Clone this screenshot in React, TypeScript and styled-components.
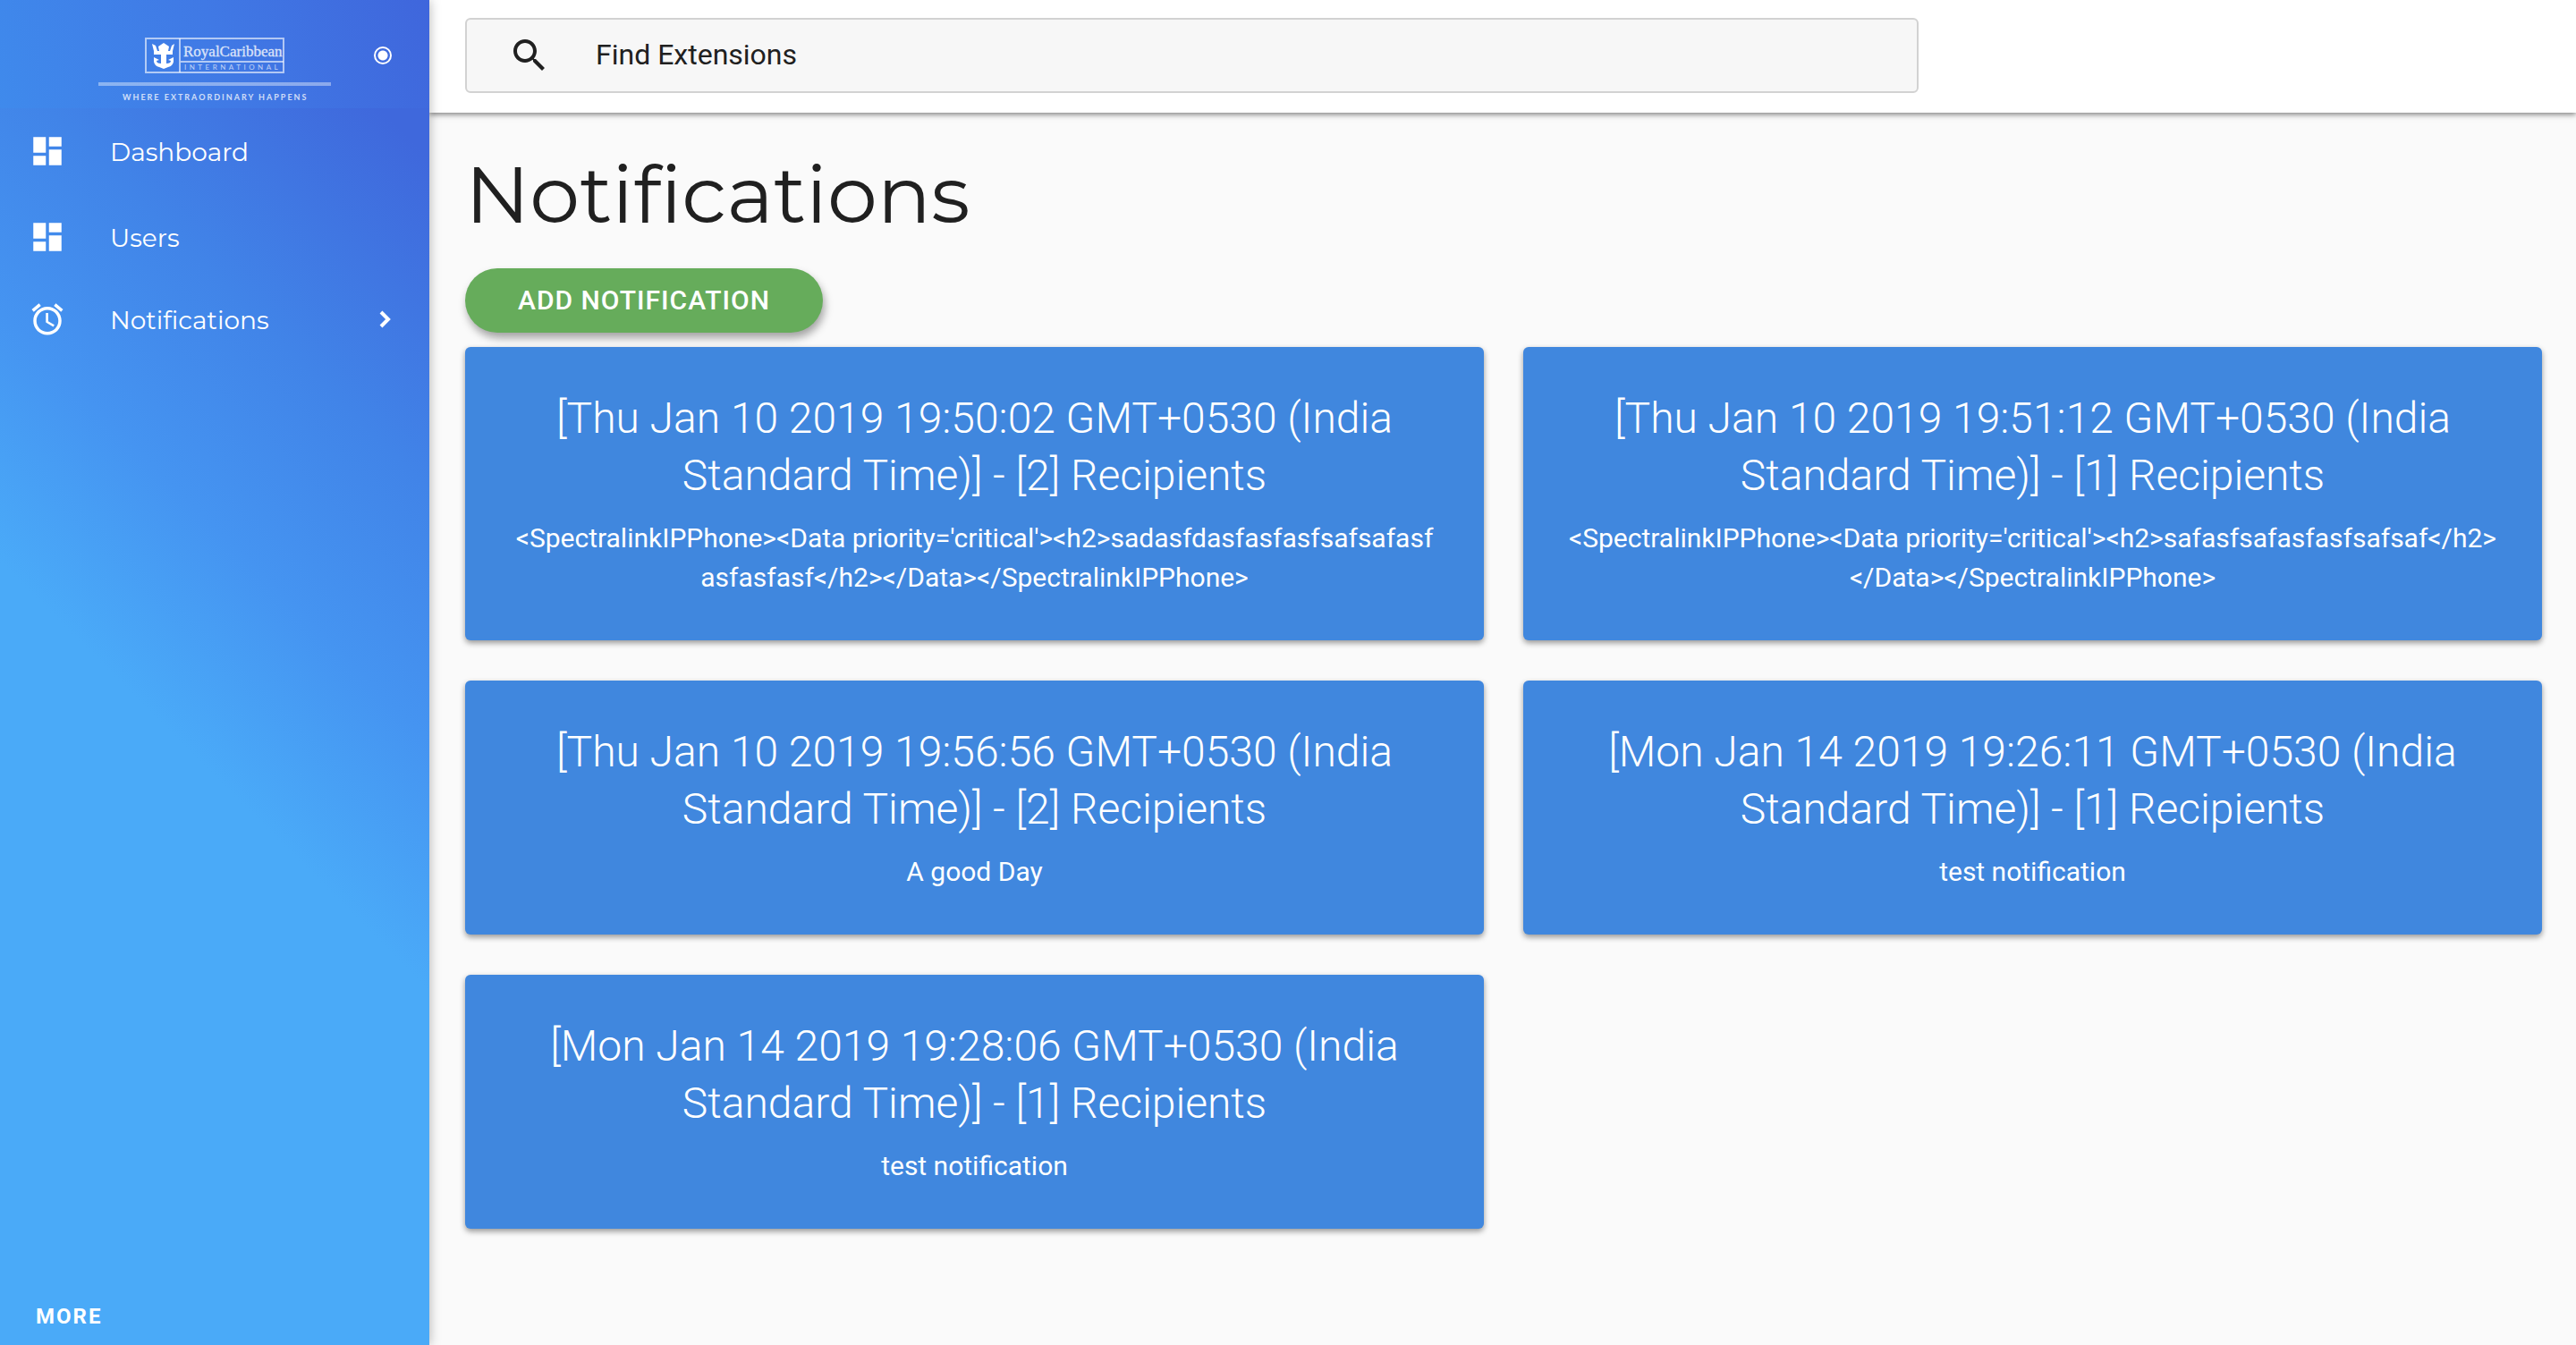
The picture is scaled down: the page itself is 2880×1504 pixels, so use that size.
import React from "react";
import styled, { createGlobalStyle } from "styled-components";

const GlobalStyle = createGlobalStyle`
  *, *::before, *::after { box-sizing: border-box; }
  body {
    margin: 0;
    background: #fafafa;
    color: #202020;
    font-family: Roboto, "Liberation Sans", sans-serif;
    font-size: 32px;
  }
`;

const Page = styled.div`
  display: grid;
  grid-template-columns: 480px minmax(0, 1fr);
  min-height: 100vh;
`;

const Sidebar = styled.aside`
  display: flex;
  flex-direction: column;
  box-shadow: 0 0 12px rgba(0, 0, 0, 0.3);
  color: #fff;
  z-index: 2;
`;

const Brand = styled.div`
  display: grid;
  grid-template-columns: 1fr auto 1fr;
  align-items: start;
  height: 121px;
  padding: 42px 38px 0;
  background: linear-gradient(70deg, #3f8aec 0%, #4079e5 52%, #3f66dc 100%);
`;

const LogoLink = styled.a`
  grid-column: 2;
  display: block;
  line-height: 0;
`;

const PinLabel = styled.label`
  display: flex;
  justify-content: flex-end;
  padding-top: 10px;
`;

const PinRadio = styled.input`
  appearance: none;
  width: 20px;
  height: 20px;
  margin: 0 4px 0 0;
  border: 2px solid #fff;
  border-radius: 50%;
  background: radial-gradient(circle, #fff 0 5px, transparent 6px);
`;

const SidebarBody = styled.div`
  display: flex;
  flex: 1;
  flex-direction: column;
  background: linear-gradient(45deg, #4aaaf8 0%, #4aaaf8 47%, #4594f1 62%, #4184e8 77%, #3f68dc 97%);
`;

const Menu = styled.nav`
  display: flex;
  flex-direction: column;
`;

const MenuItem = styled.a<{ $compact?: boolean }>`
  display: grid;
  grid-template-columns: 91px 1fr auto;
  align-items: center;
  height: ${(p) => (p.$compact ? 88 : 96)}px;
  padding: 0 40px 0 32px;
  color: #fff;
  font-family: Montserrat, Inter, "Open Sans", sans-serif;
  font-size: 28px;
  font-variant-ligatures: none;
  text-decoration: none;
`;

const MenuLabel = styled.span`
  padding-top: 2px;
`;

const MoreButton = styled.button`
  align-self: flex-start;
  margin: auto 0 0;
  padding: 0 40px 20px;
  border: 0;
  background: none;
  color: #fff;
  font: 700 24px/24px Roboto, sans-serif;
  letter-spacing: 2px;
`;

const Main = styled.main`
  min-width: 0;
`;

const TopBar = styled.header`
  height: 126px;
  padding: 20px 38px 0 40px;
  background: #fff;
  box-shadow: 0 2px 6px rgba(0, 0, 0, 0.5);
`;

const SearchBox = styled.label`
  display: flex;
  align-items: center;
  gap: 50px;
  width: 70%;
  height: 84px;
  padding: 0 46px;
  border: 2px solid #d2d2d2;
  border-radius: 6px;
  background: #f7f7f7;
`;

const SearchInput = styled.input`
  flex: 1;
  padding: 0 0 2px;
  border: 0;
  outline: 0;
  background: transparent;
  color: #202020;
  font: 400 32px/40px Roboto, sans-serif;
  &::placeholder { color: #202020; opacity: 1; }
`;

const Content = styled.div`
  padding: 40px 38px 40px 40px;
`;

const Title = styled.h1`
  margin: 0 0 32px;
  font: 400 89px/102px Montserrat, Inter, "Open Sans", sans-serif;
  font-variant-ligatures: none;
`;

const AddButton = styled.button`
  display: block;
  height: 72px;
  margin-bottom: 16px;
  padding: 0 59px;
  border: 0;
  border-radius: 36px;
  background: #66ac5b;
  box-shadow: 2px 6px 10px rgba(0, 0, 0, 0.35);
  color: #fff;
  font: 500 30px/40px Roboto, sans-serif;
  letter-spacing: 1px;
`;

const CardGrid = styled.div`
  display: grid;
  grid-template-columns: repeat(2, minmax(0, 1fr));
  gap: 45px 44px;
`;

const Card = styled.article`
  padding: 48px 49px;
  border-radius: 6px;
  background: #4087de;
  box-shadow: 0 3px 6px rgba(0, 0, 0, 0.4);
  color: #fff;
  text-align: center;
`;

const CardTitle = styled.h2`
  margin: 0 0 16px;
  font-size: 48px;
  font-weight: 300;
  line-height: 64px;
`;

const CardBody = styled.p`
  margin: 0;
  font-size: 30px;
  font-weight: 400;
  line-height: 44px;
  word-break: break-all;
`;

const RoyalLogo = () => (
  <svg width="260" height="72" viewBox="0 0 260 72" fill="#fff" role="img" aria-label="Royal Caribbean International">
    <g fill="none" stroke="#fff" strokeOpacity="0.6" strokeWidth="2">
      <rect x="53" y="1" width="154" height="38" />
      <path d="M91 1v38M91 27h116" />
    </g>
    <path d="M60 7l4 2 2 6h2l-1-5 3-2 3-2 3 2 3 2-1 5h2l2-6 3-2-2 8v4H62v-4z" />
    <path d="M70 19h6v10q5 0 5-3l-3-1 6-3v5q-1 5-6 6l-5 2-5-2q-5-1-6-6v-5l6 3-3 1q0 3 5 3z" />
    <text x="95" y="21" fontFamily="Liberation Serif, serif" fontSize="17" opacity="0.8" stroke="#fff" strokeWidth="0.3">RoyalCaribbean</text>
    <text x="96" y="36" fontFamily="Lato, sans-serif" fontSize="8" letterSpacing="3.5" opacity="0.65">INTERNATIONAL</text>
    <rect y="50" width="260" height="4" opacity="0.4" />
    <text x="27" y="70" fontFamily="Lato, sans-serif" fontWeight="700" fontSize="9" letterSpacing="2" opacity="0.75">WHERE EXTRAORDINARY HAPPENS</text>
  </svg>
);

const iconPaths = {
  dashboard: "M3 13h8V3H3v10zm0 8h8v-6H3v6zm10 0h8V11h-8v10zm0-18v6h8V3h-8z",
  alarm: "M22 5.72l-4.6-3.86-1.29 1.53 4.6 3.86L22 5.72zM7.88 3.39L6.6 1.86 2 5.71l1.29 1.53 4.59-3.85zM12.5 8H11v6l4.75 2.85.75-1.23-4-2.37V8zM12 4c-4.97 0-9 4.03-9 9s4.02 9 9 9c4.97 0 9-4.03 9-9s-4.03-9-9-9zm0 16c-3.87 0-7-3.13-7-7s3.13-7 7-7 7 3.13 7 7-3.13 7-7 7z",
  search: "M15.5 14h-.79l-.28-.27C15.41 12.59 16 11.11 16 9.5 16 5.91 13.09 3 9.5 3S3 5.91 3 9.5 5.91 16 9.5 16c1.61 0 3.09-.59 4.23-1.57l.27.28v.79l5 4.99L20.49 19l-4.99-5zm-6 0C7.01 14 5 11.99 5 9.5S7.01 5 9.5 5 14 7.01 14 9.5 11.99 14 9.5 14z",
};

type IconName = keyof typeof iconPaths;

const Icon = ({ name, size }: { name: IconName; size: number }) => (
  <svg width={size} height={size} viewBox="0 0 24 24" fill="currentColor" aria-hidden="true">
    <path d={iconPaths[name]} />
  </svg>
);

const menu: { label: string; icon: IconName; expandable?: boolean }[] = [
  { label: "Dashboard", icon: "dashboard" },
  { label: "Users", icon: "dashboard" },
  { label: "Notifications", icon: "alarm", expandable: true },
];

const notifications = [
  { date: "Thu Jan 10 2019 19:50:02", recipients: 2, body: "<SpectralinkIPPhone><Data priority='critical'><h2>sadasfdasfasfasfsafsafasfasfasfasf</h2></Data></SpectralinkIPPhone>" },
  { date: "Thu Jan 10 2019 19:51:12", recipients: 1, body: "<SpectralinkIPPhone><Data priority='critical'><h2>safasfsafasfasfsafsaf</h2></Data></SpectralinkIPPhone>" },
  { date: "Thu Jan 10 2019 19:56:56", recipients: 2, body: "A good Day" },
  { date: "Mon Jan 14 2019 19:26:11", recipients: 1, body: "test notification" },
  { date: "Mon Jan 14 2019 19:28:06", recipients: 1, body: "test notification" },
];

export default function App() {
  return (
    <>
      <GlobalStyle />
      <Page>
        <Sidebar>
          <Brand>
            <LogoLink href="#"><RoyalLogo /></LogoLink>
            <PinLabel><PinRadio type="radio" name="pin" defaultChecked aria-label="Pin sidebar" /></PinLabel>
          </Brand>
          <SidebarBody>
            <Menu>
              {menu.map((item) => (
                <MenuItem key={item.label} href="#" $compact={item.expandable}>
                  <Icon name={item.icon} size={42} />
                  <MenuLabel>{item.label}</MenuLabel>
                  {item.expandable && (
                    <svg width="20" height="20" viewBox="0 0 20 20" fill="none" stroke="#fff" strokeWidth="4" aria-hidden="true">
                      <path d="M6 2l8 8-8 8" />
                    </svg>
                  )}
                </MenuItem>
              ))}
            </Menu>
            <MoreButton type="button">MORE</MoreButton>
          </SidebarBody>
        </Sidebar>
        <Main>
          <TopBar>
            <SearchBox>
              <Icon name="search" size={48} />
              <SearchInput type="text" placeholder="Find Extensions" aria-label="Find Extensions" />
            </SearchBox>
          </TopBar>
          <Content>
            <Title>Notifications</Title>
            <AddButton type="button">ADD NOTIFICATION</AddButton>
            <CardGrid>
              {notifications.map((n) => (
                <Card key={n.date}>
                  <CardTitle>{`[${n.date} GMT+0530 (India Standard Time)] - [${n.recipients}] Recipients`}</CardTitle>
                  <CardBody>{n.body}</CardBody>
                </Card>
              ))}
            </CardGrid>
          </Content>
        </Main>
      </Page>
    </>
  );
}
